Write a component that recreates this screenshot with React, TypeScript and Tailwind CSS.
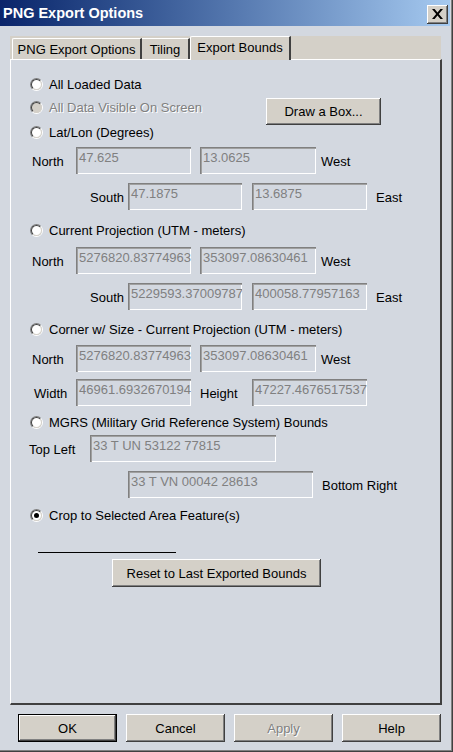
import React from 'react';

const FONT = { fontFamily: '"Liberation Sans", Arial, sans-serif' };

const Radio: React.FC<{ checked?: boolean; disabled?: boolean }> = ({ checked, disabled }) => (
  <div className="w-[13px] h-[13px] rounded-full border border-t-[#808080] border-l-[#808080] border-b-white border-r-white shrink-0">
    <div
      className={`w-full h-full rounded-full border border-t-[#404040] border-l-[#404040] border-b-[#d4d0c8] border-r-[#d4d0c8] flex items-center justify-center ${
        disabled ? 'bg-[#d4d0c8]' : 'bg-white'
      }`}
    >
      {checked && <div className="w-[5px] h-[5px] rounded-full bg-black" />}
    </div>
  </div>
);

const RadioRow: React.FC<{ label: string; checked?: boolean; disabled?: boolean }> = ({ label, checked, disabled }) => (
  <div className="flex items-center h-[20px] pl-[19px] pt-[1px]">
    <Radio checked={checked} disabled={disabled} />
    <span
      className={`ml-[6px] ${disabled ? 'text-[#808080] [text-shadow:1px_1px_0_#ffffff]' : 'text-black'}`}
    >
      {label}
    </span>
  </div>
);

const Field: React.FC<{ value: string; w: string }> = ({ value, w }) => (
  <div
    className={`${w} h-[27px] shrink-0 shadow-[inset_1px_1px_#808080,inset_2px_2px_#a0a0a0,inset_-1px_-1px_#ffffff] text-[#808080] pl-[3px] pt-[2px] leading-[17px] overflow-hidden whitespace-nowrap`}
  >
    {value}
  </div>
);

const Label: React.FC<{ cls: string; children: React.ReactNode }> = ({ cls, children }) => (
  <span className={`${cls} pt-[3px] shrink-0`}>{children}</span>
);

const Button: React.FC<{ label: string; cls: string; def?: boolean; disabled?: boolean }> = ({ label, cls, def, disabled }) => (
  <div
    className={`${cls} shrink-0 bg-[#d4d0c8] flex items-center justify-center pt-[1px] ${
      def
        ? 'border border-black shadow-[inset_-1px_-1px_#404040,inset_1px_1px_#ffffff,inset_-2px_-2px_#808080]'
        : 'shadow-[inset_-1px_-1px_#404040,inset_1px_1px_#ffffff,inset_-2px_-2px_#808080]'
    } ${disabled ? 'text-[#808080] [text-shadow:1px_1px_0_#ffffff]' : 'text-black'}`}
  >
    {label}
  </div>
);

export default function App() {
  return (
    <div
      className="w-[453px] h-[752px] bg-[#d3d8e0] text-[13px] text-black flex flex-col shadow-[inset_-1px_-1px_#404040,inset_-2px_-2px_#808080] overflow-hidden"
      style={FONT}
    >
      {/* title bar */}
      <div className="h-[26px] mr-[3px] bg-gradient-to-r from-[#0a246a] to-[#a6caf0] flex items-center justify-between pl-[3px] pr-[2px] shrink-0">
        <span className="text-white font-bold text-[14.5px] pt-[2px]">PNG Export Options</span>
        <div className="w-[21px] h-[19px] mt-[2px] bg-[#d4d0c8] shadow-[inset_-1px_-1px_#404040,inset_1px_1px_#ffffff,inset_-2px_-2px_#808080] flex items-center justify-center">
          <svg width="11" height="10" viewBox="0 0 11 10">
            <path d="M0 0h2.6l2.9 3.4L8.4 0H11L6.8 5 11 10H8.4L5.5 6.6 2.6 10H0l4.2-5z" fill="#000" />
          </svg>
        </div>
      </div>

      {/* tabs */}
      <div className="mt-[10px] mx-[10px] w-[431px] h-[23px] bg-[#d4d0c8] flex items-end pl-[2px] shrink-0">
        <div className="h-[21px] w-[130px] flex items-center justify-center border-t border-l border-white border-r-2 border-r-[#404040] rounded-tl-[2px] pt-[1px]">
          PNG Export Options
        </div>
        <div className="h-[21px] w-[48px] flex items-center justify-center border-t border-white border-r-2 border-r-[#404040] pt-[1px]">
          Tiling
        </div>
        <div className="h-[24px] w-[101px] -mb-px flex items-center justify-center border-t border-l border-white border-r-2 border-r-[#404040] rounded-tl-[2px] bg-[#d4d0c8] relative z-10 pb-[2px]">
          Export Bounds
        </div>
      </div>

      {/* panel */}
      <div className="mx-[10px] w-[432px] h-[646px] shrink-0 border-t border-l border-white border-r-2 border-b-2 border-r-[#404040] border-b-[#404040] flex flex-col">
        <div className="mt-[14px]">
          <RadioRow label="All Loaded Data" />
        </div>
        <div className="flex mt-[3px]">
          <div className="w-[255px] flex flex-col">
            <RadioRow label="All Data Visible On Screen" disabled />
            <div className="mt-[5px]">
              <RadioRow label="Lat/Lon (Degrees)" />
            </div>
          </div>
          <Button label="Draw a Box..." cls="w-[115px] h-[27px] mt-[1px]" />
        </div>

        <div className="flex items-center mt-[5px] h-[27px]">
          <Label cls="ml-[21px] w-[44px]">North</Label>
          <Field value="47.625" w="w-[115px]" />
          <div className="ml-[9px]"><Field value="13.0625" w="w-[116px]" /></div>
          <Label cls="ml-[5px]">West</Label>
        </div>
        <div className="flex items-center mt-[9px] h-[27px]">
          <Label cls="ml-[79px] w-[38px]">South</Label>
          <Field value="47.1875" w="w-[114px]" />
          <div className="ml-[10px]"><Field value="13.6875" w="w-[115px]" /></div>
          <Label cls="ml-[9px]">East</Label>
        </div>

        <div className="mt-[10px]">
          <RadioRow label="Current Projection (UTM - meters)" />
        </div>
        <div className="flex items-center mt-[7px] h-[27px]">
          <Label cls="ml-[21px] w-[44px]">North</Label>
          <Field value="5276820.83774963" w="w-[115px]" />
          <div className="ml-[9px]"><Field value="353097.08630461" w="w-[116px]" /></div>
          <Label cls="ml-[5px]">West</Label>
        </div>
        <div className="flex items-center mt-[9px] h-[27px]">
          <Label cls="ml-[79px] w-[38px]">South</Label>
          <Field value="5229593.37009787" w="w-[114px]" />
          <div className="ml-[10px]"><Field value="400058.77957163" w="w-[115px]" /></div>
          <Label cls="ml-[9px]">East</Label>
        </div>

        <div className="mt-[9px]">
          <RadioRow label="Corner w/ Size - Current Projection (UTM - meters)" />
        </div>
        <div className="flex items-center mt-[6px] h-[27px]">
          <Label cls="ml-[21px] w-[44px]">North</Label>
          <Field value="5276820.83774963" w="w-[115px]" />
          <div className="ml-[9px]"><Field value="353097.08630461" w="w-[116px]" /></div>
          <Label cls="ml-[5px]">West</Label>
        </div>
        <div className="flex items-center mt-[7px] h-[27px]">
          <Label cls="ml-[23px] w-[42px]">Width</Label>
          <Field value="46961.6932670194" w="w-[115px]" />
          <Label cls="ml-[9px] w-[52px]">Height</Label>
          <Field value="47227.4676517537" w="w-[115px]" />
        </div>

        <div className="mt-[6px]">
          <RadioRow label="MGRS (Military Grid Reference System) Bounds" />
        </div>
        <div className="flex items-center mt-[3px] h-[27px]">
          <Label cls="ml-[18px] w-[61px]">Top Left</Label>
          <Field value="33 T UN 53122 77815" w="w-[186px]" />
        </div>
        <div className="flex items-center mt-[9px] h-[27px]">
          <div className="ml-[117px]"><Field value="33 T VN 00042 28613" w="w-[185px]" /></div>
          <Label cls="ml-[9px]">Bottom Right</Label>
        </div>

        <div className="mt-[7px]">
          <RadioRow label="Crop to Selected Area Feature(s)" checked />
        </div>

        <div className="mt-[27px] ml-[27px] w-[138px] h-px bg-black" />
        <div className="mt-[6px] ml-[101px]">
          <Button label="Reset to Last Exported Bounds" cls="w-[209px] h-[28px]" />
        </div>
      </div>

      {/* buttons */}
      <div className="flex mt-[9px] ml-[18px] gap-[9px]">
        <Button label="OK" cls="w-[99px] h-[28px]" def />
        <Button label="Cancel" cls="w-[99px] h-[28px]" />
        <Button label="Apply" cls="w-[99px] h-[28px]" disabled />
        <Button label="Help" cls="w-[99px] h-[28px]" />
      </div>
    </div>
  );
}
